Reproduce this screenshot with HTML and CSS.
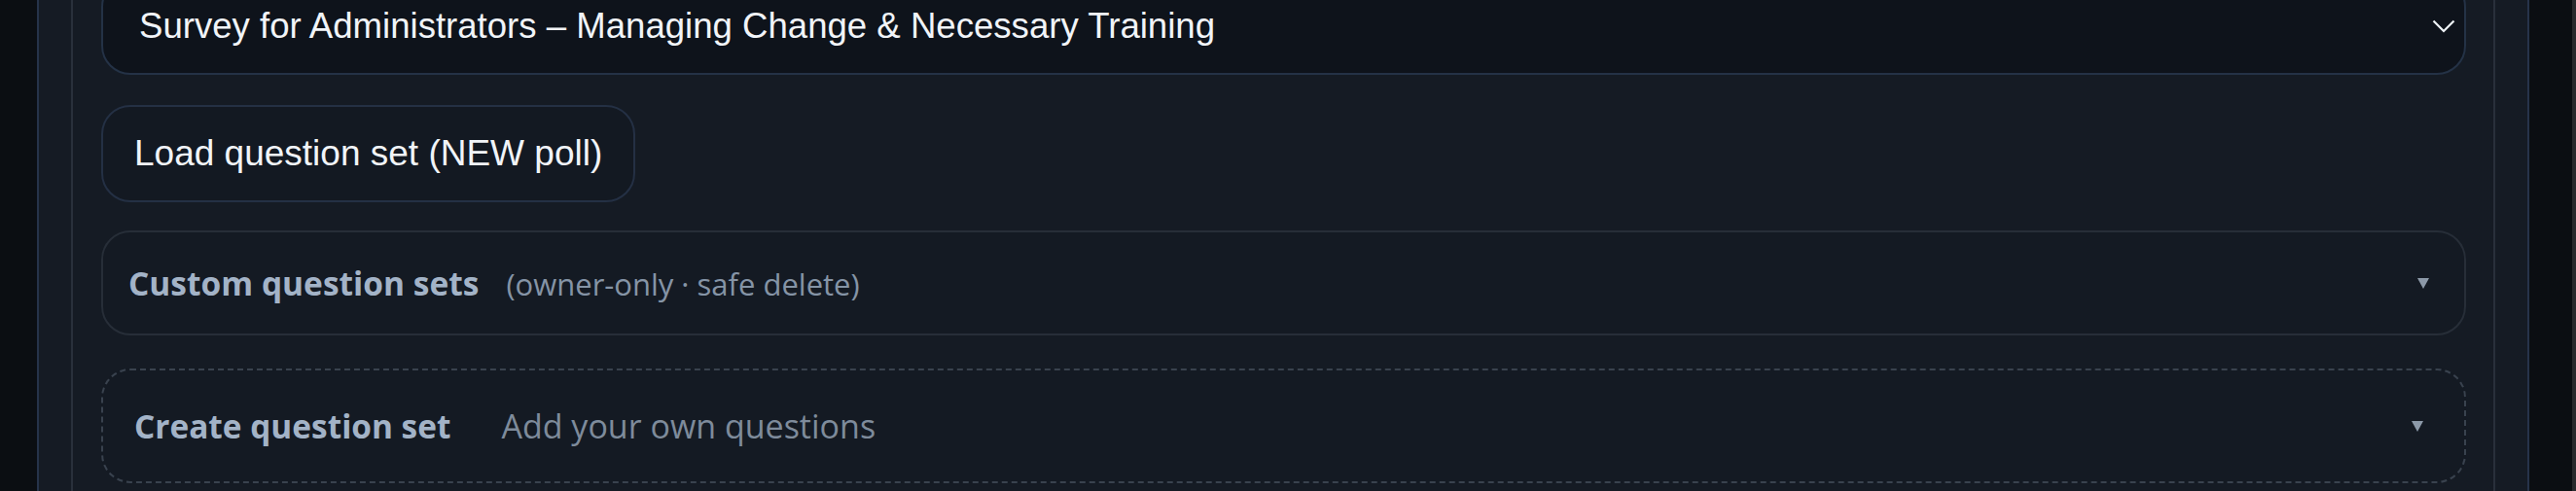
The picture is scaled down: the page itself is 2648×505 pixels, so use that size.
FILE: index.html
```html
<!DOCTYPE html>
<html lang="en">
<head>
<meta charset="utf-8">
<title>Question sets</title>
<link rel="stylesheet" href="styles.css">
</head>
<body>
<div class="page">
  <main class="shell">
    <section class="card">
      <div class="select">
        <span class="select-value">Survey for Administrators – Managing Change &amp; Necessary Training</span>
        <svg class="chevron" width="24" height="14" viewBox="0 0 24 14" aria-hidden="true"><polyline points="1.5,1.5 12,12 22.5,1.5" fill="none" stroke="#eef2f7" stroke-width="2.2"/></svg>
      </div>
      <div class="actions">
        <button class="btn">Load question set (NEW poll)</button>
      </div>
      <div class="panel panel-solid">
        <div class="panel-head">
          <span class="panel-title">Custom question sets</span>
          <span class="panel-note">(owner-only · safe delete)</span>
        </div>
        <span class="marker"></span>
      </div>
      <div class="panel panel-dashed">
        <div class="panel-head panel-head-wide">
          <span class="panel-title">Create question set</span>
          <span class="panel-hint">Add your own questions</span>
        </div>
        <span class="marker"></span>
      </div>
    </section>
  </main>
  <div class="scroll-edge"></div>
</div>
</body>
</html>
```

FILE: styles.css
```css
* { box-sizing: border-box; }

html, body {
  margin: 0;
  padding: 0;
  background: #0b0e12;
  height: 100%;
  overflow: hidden;
}

.page {
  display: flex;
  min-height: 100vh;
}

.shell {
  margin-left: 38px;
  width: 2562px;
  min-height: 100vh;
  background: #151b24;
  border-left: 2px solid #26334a;
  border-right: 2px solid #26334a;
  padding: 0 33px;
}

.scroll-edge {
  margin-left: auto;
  width: 4px;
  background: #2a2b2e;
}

.card {
  min-height: 100vh;
  border-left: 2px solid #29303b;
  border-right: 2px solid #29303b;
  padding: 0 28px 0 29px;
  display: flex;
  flex-direction: column;
}

.select {
  margin-top: -23px;
  height: 100px;
  display: flex;
  align-items: center;
  justify-content: space-between;
  background: #0e131b;
  border: 2px solid #243246;
  border-radius: 30px;
  padding: 0 9px 0 37px;
  font-family: "Liberation Sans", Arial, sans-serif;
  font-size: 36.6px;
  color: #f1f4f8;
}

.chevron { display: block; }

.actions {
  margin-top: 31px;
  display: flex;
}

.btn {
  height: 100px;
  padding: 0 32px;
  background: #131922;
  border: 2px solid #243044;
  border-radius: 30px;
  font-family: "Liberation Sans", Arial, sans-serif;
  font-size: 37px;
  color: #f1f4f8;
}

.panel {
  display: flex;
  align-items: center;
  justify-content: space-between;
  border-radius: 30px;
  background: #141a23;
}

.panel-solid {
  margin-top: 29px;
  height: 108px;
  border: 2px solid #272e38;
  padding: 0 36px 0 26px;
}

.panel-dashed {
  margin-top: 34px;
  height: 118px;
  border: 2px dashed #39424e;
  padding: 0 42px 0 32px;
}

.panel-head {
  display: flex;
  align-items: baseline;
  gap: 28px;
  font-family: "Open Sans", "Noto Sans", sans-serif;
}

.panel-head-wide { gap: 52px; }

.panel-title {
  font-weight: 700;
  font-size: 33.5px;
  color: #a3b3c7;
}

.panel-dashed .panel-title { font-size: 33.4px; }

.panel-note {
  font-size: 31px;
  color: #8594a6;
}

.panel-hint {
  font-size: 34px;
  color: #7e8b9b;
}

.marker {
  width: 0;
  height: 0;
  border-left: 6px solid transparent;
  border-right: 6px solid transparent;
  border-top: 11px solid #8c99a8;
}
```
